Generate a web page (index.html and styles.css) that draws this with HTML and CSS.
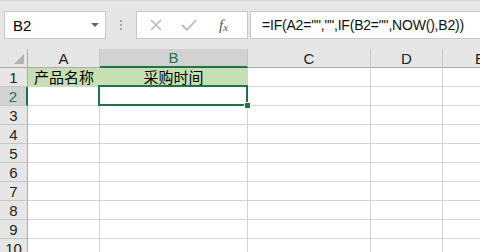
FILE: index.html
```html
<!DOCTYPE html>
<html lang="zh-CN">
<head>
  <meta charset="UTF-8" />
  <title>采购时间</title>
  <link rel="stylesheet" href="styles.css">
</head>
<body>
  <div class="toolbar">
    <div class="namebox">
      <span>B2</span>
      <span class="caret"></span>
    </div>
    <div class="grip"><i></i><i></i><i></i></div>
    <div class="fxbox">
      <svg class="btn" width="14" height="14" viewBox="0 0 14 14"><path d="M2 2 L12 12 M12 2 L2 12" stroke="#b9b9b9" stroke-width="1.6" fill="none"/></svg>
      <svg class="btn" width="18" height="14" viewBox="0 0 18 14"><path d="M2 7 L7 12 L16 2" stroke="#b9b9b9" stroke-width="1.8" fill="none"/></svg>
      <span class="fx">f<sub>x</sub></span>
    </div>
    <div class="formula">=IF(A2="","",IF(B2="",NOW(),B2))</div>
  </div>

  <div class="sheet">
    <div class="corner"><span class="tri"></span></div>
    <div class="colhead">A</div>
    <div class="colhead active">B</div>
    <div class="colhead">C</div>
    <div class="colhead">D</div>
    <div class="colhead left">E</div>

    <div class="rowhead">1</div>
    <div class="cell fill">产品名称</div>
    <div class="cell fill center">采购时间</div>
    <div class="cell"></div>
    <div class="cell"></div>
    <div class="cell"></div>

    <div class="rowhead active">2</div>
    <div class="cell"></div>
    <div class="cell sel"></div>
    <div class="cell"></div>
    <div class="cell"></div>
    <div class="cell"></div>

    <div class="rowhead">3</div>
    <div class="cell"></div><div class="cell"></div><div class="cell"></div><div class="cell"></div><div class="cell"></div>
    <div class="rowhead">4</div>
    <div class="cell"></div><div class="cell"></div><div class="cell"></div><div class="cell"></div><div class="cell"></div>
    <div class="rowhead">5</div>
    <div class="cell"></div><div class="cell"></div><div class="cell"></div><div class="cell"></div><div class="cell"></div>
    <div class="rowhead">6</div>
    <div class="cell"></div><div class="cell"></div><div class="cell"></div><div class="cell"></div><div class="cell"></div>
    <div class="rowhead">7</div>
    <div class="cell"></div><div class="cell"></div><div class="cell"></div><div class="cell"></div><div class="cell"></div>
    <div class="rowhead">8</div>
    <div class="cell"></div><div class="cell"></div><div class="cell"></div><div class="cell"></div><div class="cell"></div>
    <div class="rowhead">9</div>
    <div class="cell"></div><div class="cell"></div><div class="cell"></div><div class="cell"></div><div class="cell"></div>
    <div class="rowhead">10</div>
    <div class="cell"></div><div class="cell"></div><div class="cell"></div><div class="cell"></div><div class="cell"></div>
  </div>
</body>
</html>
```

FILE: styles.css
```css
body {
  margin: 0;
  width: 480px;
  height: 252px;
  overflow: hidden;
  background: #fff;
  font-family: "Liberation Sans", "Noto Sans CJK SC", sans-serif;
  color: #000;
}

/* formula bar */
.toolbar {
  height: 49px;
  box-sizing: border-box;
  background: #e6e6e6;
  border-top: 1px solid #d4d4d4;
  display: flex;
  align-items: flex-start;
  padding: 10px 0 0 4px;
}
.namebox {
  width: 102px;
  height: 28px;
  box-sizing: border-box;
  background: #fff;
  border: 1px solid #c6c6c6;
  display: flex;
  align-items: center;
  justify-content: space-between;
  padding: 0 5px 0 8px;
  font-size: 15px;
}
.caret {
  width: 0;
  height: 0;
  border-left: 4px solid transparent;
  border-right: 4px solid transparent;
  border-top: 4px solid #666;
  margin-right: 1px;
}
.grip {
  width: 30px;
  height: 28px;
  display: flex;
  flex-direction: column;
  align-items: center;
  justify-content: center;
  gap: 2px;
}
.grip i {
  width: 2px;
  height: 2px;
  background: #a6a6a6;
}
.fxbox {
  width: 112px;
  height: 28px;
  box-sizing: border-box;
  background: #fff;
  border: 1px solid #c6c6c6;
  display: flex;
  align-items: center;
  padding-left: 12px;
  gap: 17px;
}
.fx {
  font-family: "Liberation Serif", serif;
  font-style: italic;
  font-size: 15px;
  color: #555;
  margin-left: 4px;
}
.fx sub {
  font-size: 11px;
  vertical-align: -1px;
}
.formula {
  flex: 1;
  height: 28px;
  box-sizing: border-box;
  margin-left: 2px;
  background: #fff;
  border: 1px solid #c6c6c6;
  border-right: none;
  display: flex;
  align-items: center;
  padding-left: 11px;
  font-size: 14px;
  letter-spacing: -0.2px;
  color: #111;
}

/* grid */
.sheet {
  display: grid;
  grid-template-columns: 28px 72px 148px 123px 72px 1fr;
  grid-auto-rows: 19px;
  font-size: 15px;
}
.sheet > div {
  box-sizing: border-box;
}
.corner {
  background: #e6e6e6;
  border-right: 1px solid #ababab;
  border-bottom: 1px solid #ababab;
  display: flex;
  align-items: flex-end;
  justify-content: flex-end;
  padding: 0 3px 3px 0;
}
.tri {
  width: 0;
  height: 0;
  border-left: 10px solid transparent;
  border-bottom: 10px solid #b4b4b4;
}
.colhead {
  background: #e6e6e6;
  border-right: 1px solid #c6c6c6;
  border-bottom: 1px solid #ababab;
  display: flex;
  align-items: center;
  justify-content: center;
  color: #222;
}
.colhead.left {
  justify-content: flex-start;
  padding-left: 32px;
}
.colhead.active {
  background: #d2d2d2;
  border-bottom: 2px solid #217346;
  color: #217346;
}
.rowhead {
  background: #e6e6e6;
  border-right: 1px solid #ababab;
  border-bottom: 1px solid #c6c6c6;
  display: flex;
  align-items: center;
  justify-content: center;
  color: #222;
}
.rowhead.active {
  background: #d2d2d2;
  border-right: 2px solid #217346;
  color: #217346;
}
.cell {
  border-right: 1px solid #d4d4d4;
  border-bottom: 1px solid #d4d4d4;
  display: flex;
  align-items: center;
  padding-left: 6px;
  line-height: 1;
}
.cell.fill {
  background: #c6e0b4;
}
.cell.center {
  justify-content: center;
  padding-left: 0;
}
.cell.sel {
  position: relative;
}
.cell.sel::before {
  content: "";
  position: absolute;
  left: -2px;
  top: -2px;
  right: -1px;
  bottom: -1px;
  border: 2px solid #217346;
}
.cell.sel::after {
  content: "";
  position: absolute;
  right: -4px;
  bottom: -4px;
  width: 5px;
  height: 5px;
  background: #217346;
  border: 1px solid #fff;
}
```
